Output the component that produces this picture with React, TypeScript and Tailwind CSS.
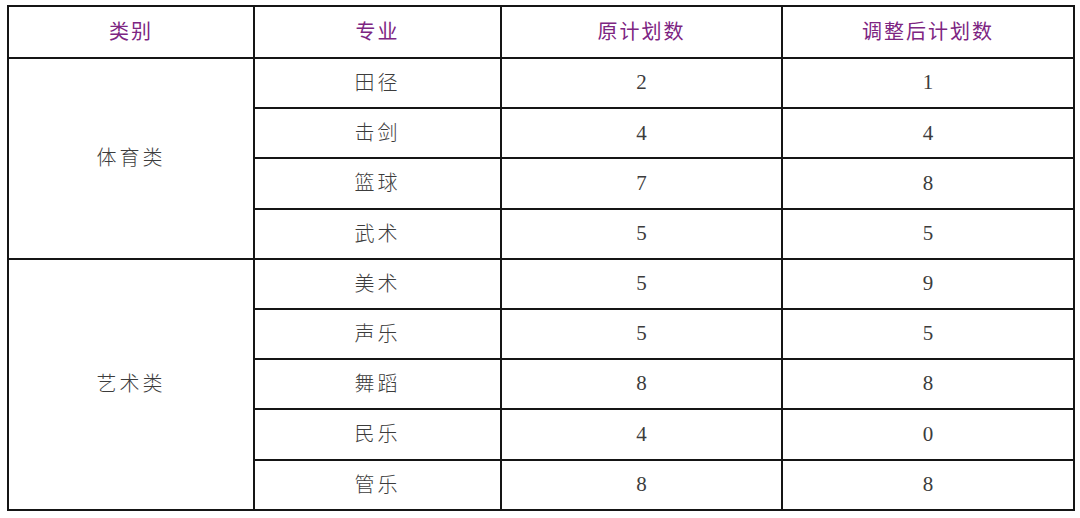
import React from 'react'

type Row = { major: string; plan: number; adjusted: number }

const sports: Row[] = [
  { major: '田径', plan: 2, adjusted: 1 },
  { major: '击剑', plan: 4, adjusted: 4 },
  { major: '篮球', plan: 7, adjusted: 8 },
  { major: '武术', plan: 5, adjusted: 5 },
]

const arts: Row[] = [
  { major: '美术', plan: 5, adjusted: 9 },
  { major: '声乐', plan: 5, adjusted: 5 },
  { major: '舞蹈', plan: 8, adjusted: 8 },
  { major: '民乐', plan: 4, adjusted: 0 },
  { major: '管乐', plan: 8, adjusted: 8 },
]

const font = { fontFamily: '"Liberation Serif", "Noto Sans CJK SC", serif' }

const cell = 'border-2 border-[#151515] text-center align-middle p-0'

const App: React.FC = () => {
  const groups = [
    { name: '体育类', rows: sports },
    { name: '艺术类', rows: arts },
  ]

  return (
    <div className="w-[1080px] h-[518px] bg-white pt-[5px] pl-[7px]" style={font}>
      <table className="table-fixed border-collapse w-[1066px] text-[20px] text-[#3c3c3c]">
        <colgroup>
          <col className="w-[246px]" />
          <col className="w-[247px]" />
          <col className="w-[281px]" />
          <col className="w-[292px]" />
        </colgroup>
        <thead>
          <tr className="h-[52px] text-[#7d2582]">
            <th className={`${cell} font-normal tracking-[2px]`}>类别</th>
            <th className={`${cell} font-normal tracking-[2px]`}>专业</th>
            <th className={`${cell} font-normal tracking-[2px]`}>原计划数</th>
            <th className={`${cell} font-normal tracking-[2px]`}>调整后计划数</th>
          </tr>
        </thead>
        <tbody>
          {groups.map((g) =>
            g.rows.map((r, i) => (
              <tr key={g.name + r.major} className="h-[50.2px]">
                {i === 0 && (
                  <td rowSpan={g.rows.length} className={`${cell} tracking-[3px] font-light`}>
                    {g.name}
                  </td>
                )}
                <td className={`${cell} tracking-[3px] font-light`}>{r.major}</td>
                <td className={`${cell} text-[21px]`}>{r.plan}</td>
                <td className={`${cell} text-[21px]`}>{r.adjusted}</td>
              </tr>
            ))
          )}
        </tbody>
      </table>
    </div>
  )
}

export default App
